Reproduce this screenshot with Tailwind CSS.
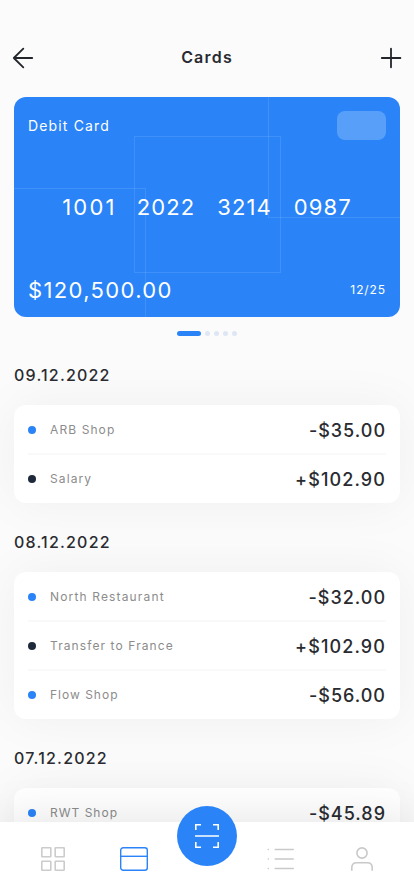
<!DOCTYPE html>
<html lang="en">
<head>
<meta charset="utf-8">
<meta name="viewport" content="width=device-width, initial-scale=1">
<title>Cards</title>
<script src="https://cdn.jsdelivr.net/npm/@tailwindcss/browser@4"></script>
</head>
<body class="bg-[#fbfbfb] font-[Inter,sans-serif] text-[#292b30]">
<div class="relative h-[896px] w-[414px] overflow-hidden">
  <header class="flex h-[97px] items-center justify-between pt-[19px] pl-[12px] pr-[12px]">
    <svg class="h-[22px] w-[22px]" viewBox="0 0 22 22" fill="none" stroke="#22252b" stroke-width="1.8" stroke-linecap="round" stroke-linejoin="round"><path d="M20.2 11H1.8M11.3 1.7 1.8 11l9.5 9.3"/></svg>
    <h1 class="mb-[2px] text-[16px] leading-[20px] font-semibold tracking-[1.2px]">Cards</h1>
    <svg class="h-[22px] w-[22px]" viewBox="0 0 22 22" fill="none" stroke="#22252b" stroke-width="1.8" stroke-linecap="round"><path d="M1.8 11h18.6M11 1.7v18.6"/></svg>
  </header>

  <section class="relative mx-[14px] flex h-[220px] flex-col rounded-[12px] bg-[#2a84f8] px-[14px] text-white">
    <svg class="absolute inset-0 h-[220px] w-[386px]" viewBox="0 0 386 220" fill="none" stroke="#fff" stroke-opacity=".1"><path d="M120.5 39.5h146v136h-146zM0 91.5h131.500V220M254.500 0v120.500H386"/></svg>
    <div class="flex items-start justify-between pt-[14px]">
      <span class="pt-[5px] text-[14px] leading-[20px] tracking-[1.15px]">Debit Card</span>
      <span class="h-[29px] w-[49px] rounded-[8px] bg-white/22"></span>
    </div>
    <div class="mt-[53px] flex justify-center gap-[22px] text-[22px] leading-[28px] tracking-[1.1px]">
      <span class="-mr-[2px] tracking-[2.2px]">1001</span><span>2022</span><span>3214</span><span>0987</span>
    </div>
    <div class="mt-[55px] flex items-center justify-between">
      <span class="text-[22px] leading-[28px] tracking-[1.35px]">$120,500.00</span>
      <span class="text-[12px] leading-[16px] tracking-[0.9px]">12/25</span>
    </div>
  </section>

  <div class="flex h-[33px] items-center justify-center gap-[4px]">
    <span class="h-[5px] w-[24px] rounded-full bg-[#2a84f8]"></span>
    <span class="h-[5px] w-[5px] rounded-full bg-[#dfe7f5]"></span>
    <span class="h-[5px] w-[5px] rounded-full bg-[#dfe7f5]"></span>
    <span class="h-[5px] w-[5px] rounded-full bg-[#dfe7f5]"></span>
    <span class="h-[5px] w-[5px] rounded-full bg-[#dfe7f5]"></span>
  </div>

  <main class="px-[14px] pt-[15px]">
    <h2 class="text-[16px] leading-[20px] font-medium tracking-[1.2px]">09.12.2022</h2>
    <ul class="mt-[20px] rounded-[12px] bg-white px-[14px] shadow-[0_0_50px_rgba(0,0,0,0.05)]">
      <li class="flex h-[49px] items-center pt-[1px] shadow-[0_1px_0_#f9f9f9,inset_0_-1px_0_#f9f9f9]"><span class="h-[8px] w-[8px] rounded-full bg-[#2a84f8]"></span><span class="ml-[14px] text-[12px] tracking-[1.1px] text-[#8c8c8c]">ARB Shop</span><span class="ml-auto text-[18px] font-medium tracking-[1px]">-$35.00</span></li>
      <li class="flex h-[49px] items-center pt-[1px]"><span class="h-[8px] w-[8px] rounded-full bg-[#1e293b]"></span><span class="ml-[14px] text-[12px] tracking-[1.1px] text-[#8c8c8c]">Salary</span><span class="ml-auto text-[18px] font-medium tracking-[1.1px]">+$102.90</span></li>
    </ul>
    <h2 class="mt-[29px] text-[16px] leading-[20px] font-medium tracking-[1.2px]">08.12.2022</h2>
    <ul class="mt-[20px] rounded-[12px] bg-white px-[14px] shadow-[0_0_50px_rgba(0,0,0,0.05)]">
      <li class="flex h-[49px] items-center pt-[1px] shadow-[0_1px_0_#f9f9f9,inset_0_-1px_0_#f9f9f9]"><span class="h-[8px] w-[8px] rounded-full bg-[#2a84f8]"></span><span class="ml-[14px] text-[12px] tracking-[1.15px] text-[#8c8c8c]">North Restaurant</span><span class="ml-auto text-[18px] font-medium tracking-[1px]">-$32.00</span></li>
      <li class="flex h-[49px] items-center pt-[1px] shadow-[0_1px_0_#f9f9f9,inset_0_-1px_0_#f9f9f9]"><span class="h-[8px] w-[8px] rounded-full bg-[#1e293b]"></span><span class="ml-[14px] text-[12px] tracking-[1.1px] text-[#8c8c8c]">Transfer to France</span><span class="ml-auto text-[18px] font-medium tracking-[1.1px]">+$102.90</span></li>
      <li class="flex h-[49px] items-center pt-[1px]"><span class="h-[8px] w-[8px] rounded-full bg-[#2a84f8]"></span><span class="ml-[14px] text-[12px] tracking-[1px] text-[#8c8c8c]">Flow Shop</span><span class="ml-auto text-[18px] font-medium tracking-[1px]">-$56.00</span></li>
    </ul>
    <h2 class="mt-[29px] text-[16px] leading-[20px] font-medium tracking-[1.2px]">07.12.2022</h2>
    <ul class="mt-[20px] rounded-[12px] bg-white px-[14px] shadow-[0_0_50px_rgba(0,0,0,0.05)]">
      <li class="flex h-[49px] items-center pt-[1px]"><span class="h-[8px] w-[8px] rounded-full bg-[#2a84f8]"></span><span class="ml-[14px] text-[12px] tracking-[1px] text-[#8c8c8c]">RWT Shop</span><span class="ml-auto text-[18px] font-medium tracking-[1px]">-$45.89</span></li>
    </ul>
  </main>

  <nav class="absolute inset-x-0 bottom-0 flex h-[74px] items-start bg-white pl-[41px] shadow-[0_0_50px_rgba(0,0,0,0.12)]">
    <svg class="mt-[25px] h-[24px] w-[24px]" viewBox="0 0 24 24" fill="none" stroke="#cccccc" stroke-width="1.6"><rect x=".8" y=".8" width="9" height="9" rx=".5"/><rect x="14.200" y=".8" width="9" height="9" rx=".5"/><rect x=".8" y="14.200" width="9" height="9" rx=".5"/><rect x="14.200" y="14.200" width="9" height="9" rx=".5"/></svg>
    <svg class="mt-[25px] ml-[55px] h-[24px] w-[28px]" viewBox="0 0 28 24" fill="none" stroke="#2a84f8" stroke-width="1.4"><rect x=".7" y=".7" width="26.600" height="22.600" rx="2.500"/><path d="M.7 9.300h26.600"/></svg>
    <div class="-mt-[16px] ml-[29px] flex h-[60px] w-[60px] items-center justify-center rounded-full bg-[#2a84f8]">
      <svg class="h-[24px] w-[24px]" viewBox="0 0 24 24" fill="none" stroke="#fff" stroke-width="1.6"><path d="M.8 6V.8H6M18 .8h5.200V6M23.200 18v5.200H18M6 23.200H.8V18M0 12h24"/></svg>
    </div>
    <svg class="mt-[25px] ml-[30px] h-[24px] w-[27px]" viewBox="0 0 27 24" fill="none" stroke="#c9c9c9" stroke-width="1.5" stroke-linecap="round"><path d="M8.200 2.500h18M8.200 12h18M8.200 21.500h18M1.300 2.500h.1M1.300 12h.1M1.300 21.500h.1"/></svg>
    <svg class="mt-[25px] ml-[57px] h-[24px] w-[22px]" viewBox="0 0 22 24" fill="none" stroke="#c9c9c9" stroke-width="1.6"><circle cx="11" cy="6" r="5.100"/><path d="M.8 23.700v-3c0-3 1.800-4.900 4.800-4.900h10.800c3 0 4.800 1.900 4.800 4.900v3"/></svg>
  </nav>
</div>
</body>
</html>
